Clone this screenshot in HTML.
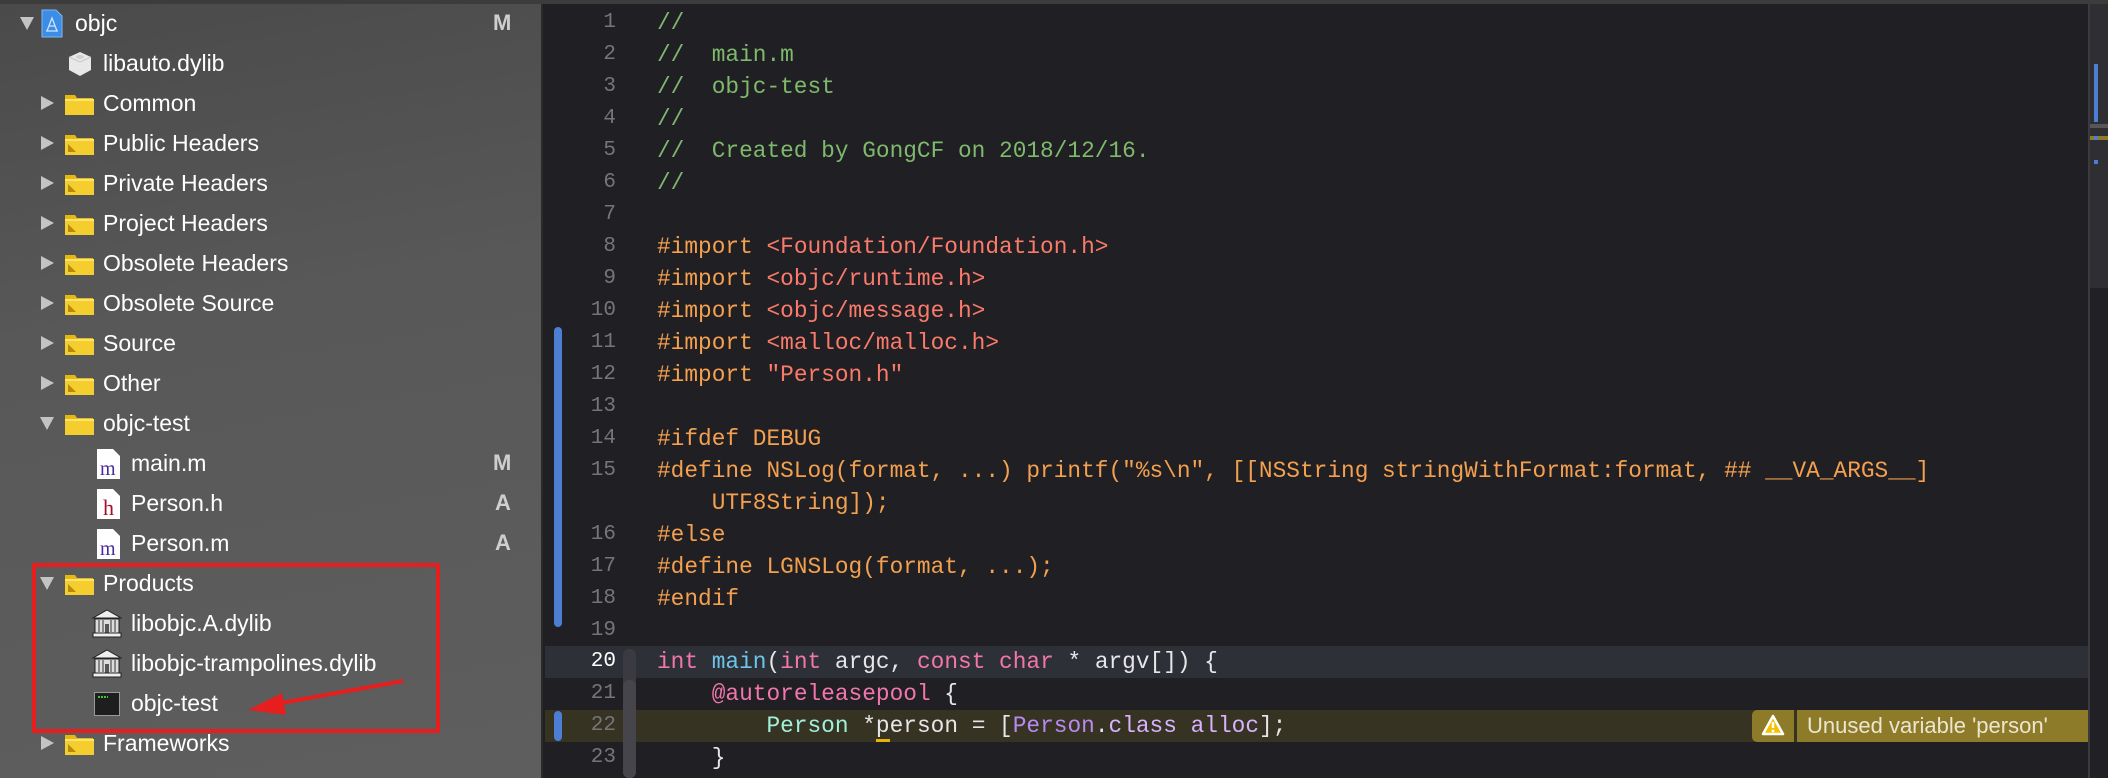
<!DOCTYPE html>
<html><head><meta charset="utf-8"><style>
*{margin:0;padding:0;box-sizing:border-box}
body{width:2108px;height:778px;overflow:hidden;background:#1f1f24;position:relative;font-family:"Liberation Sans",sans-serif}
#side{position:absolute;left:0;top:0;width:543px;height:778px;background:linear-gradient(170deg,#4a4a4a 0%,#585858 40%,#5e5e5e 100%);border-right:2px solid #2a2a2a}
#topline{position:absolute;left:0;top:0;width:2108px;height:4px;background:#3c3c3c;z-index:5}
.r{position:absolute;height:40px;line-height:40px;color:#fff;font-size:23px;white-space:nowrap}
.st{position:absolute;color:#cfcfcf;font-weight:bold;font-size:22px}
#ed{position:absolute;left:545px;top:0;width:1543px;height:778px}
.ln{position:absolute;left:0;width:71px;text-align:right;color:#75757a;font-family:"Liberation Mono",monospace;font-size:21px;height:32px;line-height:32px}
.cl{position:absolute;left:112px;font-family:"Liberation Mono",monospace;font-size:22.8px;height:32px;line-height:32px;white-space:pre;color:#e6e6e8}
.c{color:#7fb96c}.p{color:#f4a04e}.s{color:#fb7a6a}.k{color:#f276ad}.b{color:#6cc5e8}.m{color:#a0f0dc}.u{color:#b889f0}.w{color:#d7b2ff}
</style></head><body>
<div id="topline"></div>
<div id="side">
<svg style="position:absolute;left:41px;top:9px" width="22" height="29" viewBox="0 0 22 29"><path d="M1 1h14l6 6v21H1z" fill="#3b8de6" stroke="#7fb8f5"/><path d="M6 22l5-13 5 13M8 17h6M5 22h12" stroke="#cfe4ff" stroke-width="1.3" fill="none"/></svg>
<div class="r" style="left:75px;top:3px">objc</div><div class="st" style="left:493px;top:10px">M</div>

<svg style="position:absolute;left:66px;top:50px" width="28" height="28" viewBox="0 0 28 28"><path d="M14 2l11 5v13l-11 6-11-6V7z" fill="#e8e8e8"/><path d="M3 7l11 5 11-5" fill="none" stroke="#c8c8c8"/><ellipse cx="14" cy="7" rx="4" ry="2" fill="#d0d0d0"/></svg>
<div class="r" style="left:103px;top:43px">libauto.dylib</div>

<div class="r" style="left:103px;top:83px">Common</div>
<div class="r" style="left:103px;top:123px">Public Headers</div>
<div class="r" style="left:103px;top:163px">Private Headers</div>
<div class="r" style="left:103px;top:203px">Project Headers</div>
<div class="r" style="left:103px;top:243px">Obsolete Headers</div>
<div class="r" style="left:103px;top:283px">Obsolete Source</div>
<div class="r" style="left:103px;top:323px">Source</div>
<div class="r" style="left:103px;top:363px">Other</div>
<div class="r" style="left:103px;top:403px">objc-test</div>
<div class="r" style="left:131px;top:443px">main.m</div><div class="st" style="left:493px;top:450px">M</div>
<div class="r" style="left:131px;top:483px">Person.h</div><div class="st" style="left:495px;top:490px">A</div>
<div class="r" style="left:131px;top:523px">Person.m</div><div class="st" style="left:495px;top:530px">A</div>
<div class="r" style="left:103px;top:563px">Products</div>
<div class="r" style="left:131px;top:603px">libobjc.A.dylib</div>
<div class="r" style="left:131px;top:643px">libobjc-trampolines.dylib</div>
<div class="r" style="left:131px;top:683px">objc-test</div>
<div class="r" style="left:103px;top:723px">Frameworks</div>

<svg style="position:absolute;left:97px;top:449px" width="23" height="30"><path d="M0 0h16l7 7v23H0z" fill="#fff"/><text x="3" y="26" font-family="Liberation Serif" font-size="20" fill="#4b2a9e">m</text></svg>
<svg style="position:absolute;left:97px;top:489px" width="23" height="30"><path d="M0 0h16l7 7v23H0z" fill="#fff"/><text x="6" y="26" font-family="Liberation Serif" font-size="22" fill="#a3102a">h</text></svg>
<svg style="position:absolute;left:97px;top:529px" width="23" height="30"><path d="M0 0h16l7 7v23H0z" fill="#fff"/><text x="3" y="26" font-family="Liberation Serif" font-size="20" fill="#4b2a9e">m</text></svg>
<svg style="position:absolute;left:92px;top:609px" width="30" height="30" viewBox="0 0 30 30"><path d="M15 1l14 8H1z" fill="#eee" stroke="#222"/><rect x="3" y="10" width="24" height="14" fill="#ddd" stroke="#222"/><path d="M7 11v12M11 11v12M19 11v12M23 11v12" stroke="#888" stroke-width="2"/><rect x="13" y="15" width="4" height="9" fill="#555"/><rect x="1" y="24" width="28" height="4" fill="#eee" stroke="#222"/></svg>
<svg style="position:absolute;left:92px;top:649px" width="30" height="30" viewBox="0 0 30 30"><path d="M15 1l14 8H1z" fill="#eee" stroke="#222"/><rect x="3" y="10" width="24" height="14" fill="#ddd" stroke="#222"/><path d="M7 11v12M11 11v12M19 11v12M23 11v12" stroke="#888" stroke-width="2"/><rect x="13" y="15" width="4" height="9" fill="#555"/><rect x="1" y="24" width="28" height="4" fill="#eee" stroke="#222"/></svg>
<svg style="position:absolute;left:94px;top:692px" width="26" height="24"><rect x="0.5" y="0.5" width="25" height="23" fill="#1e1e1e" stroke="#9a9a9a"/><path d="M4 5h10" stroke="#3fc43f" stroke-width="2" stroke-dasharray="2 1"/></svg>

<div style="position:absolute;left:32px;top:563px;width:408px;height:170px;border:4px solid #e61e1e"></div>
<svg style="position:absolute;left:0;top:0" width="541" height="778"><path d="M403 681L270 705" stroke="#e61e1e" stroke-width="4"/><path d="M248 710l34-17 4 22z" fill="#e61e1e"/></svg>
</div>

<div id="ed">
<div style="position:absolute;left:0;top:646px;width:1543px;height:32px;background:#2e3038"></div>
<div style="position:absolute;left:0;top:710px;width:1543px;height:32px;background:#363323"></div>
<div style="position:absolute;left:9px;top:327px;width:8px;height:300px;background:#4c7fd4;border-radius:4px"></div>
<div style="position:absolute;left:9px;top:711px;width:8px;height:30px;background:#4c7fd4;border-radius:4px"></div>
<div style="position:absolute;left:78px;top:649px;width:13px;height:129px;background:#3a3a40;border-radius:6px"></div>
<div style="position:absolute;left:78px;top:680px;width:13px;height:98px;background:#45454b;border-radius:6px"></div>

<div class="ln" style="top:7px">1</div><div class="cl c" style="top:7px">//</div>
<div class="ln" style="top:39px">2</div><div class="cl c" style="top:39px">//  main.m</div>
<div class="ln" style="top:71px">3</div><div class="cl c" style="top:71px">//  objc-test</div>
<div class="ln" style="top:103px">4</div><div class="cl c" style="top:103px">//</div>
<div class="ln" style="top:135px">5</div><div class="cl c" style="top:135px">//  Created by GongCF on 2018/12/16.</div>
<div class="ln" style="top:167px">6</div><div class="cl c" style="top:167px">//</div>
<div class="ln" style="top:199px">7</div>
<div class="ln" style="top:231px">8</div><div class="cl" style="top:231px"><span class="p">#import </span><span class="s">&lt;Foundation/Foundation.h&gt;</span></div>
<div class="ln" style="top:263px">9</div><div class="cl" style="top:263px"><span class="p">#import </span><span class="s">&lt;objc/runtime.h&gt;</span></div>
<div class="ln" style="top:295px">10</div><div class="cl" style="top:295px"><span class="p">#import </span><span class="s">&lt;objc/message.h&gt;</span></div>
<div class="ln" style="top:327px">11</div><div class="cl" style="top:327px"><span class="p">#import </span><span class="s">&lt;malloc/malloc.h&gt;</span></div>
<div class="ln" style="top:359px">12</div><div class="cl" style="top:359px"><span class="p">#import </span><span class="s">"Person.h"</span></div>
<div class="ln" style="top:391px">13</div>
<div class="ln" style="top:423px">14</div><div class="cl p" style="top:423px">#ifdef DEBUG</div>
<div class="ln" style="top:455px">15</div><div class="cl p" style="top:455px">#define NSLog(format, ...) printf("%s\n", [[NSString stringWithFormat:format, ## __VA_ARGS__]</div>
<div class="cl p" style="top:487px">    UTF8String]);</div>
<div class="ln" style="top:519px">16</div><div class="cl p" style="top:519px">#else</div>
<div class="ln" style="top:551px">17</div><div class="cl p" style="top:551px">#define LGNSLog(format, ...);</div>
<div class="ln" style="top:583px">18</div><div class="cl p" style="top:583px">#endif</div>
<div class="ln" style="top:615px">19</div>
<div class="ln" style="top:646px;color:#fff">20</div><div class="cl" style="top:646px"><span class="k">int</span> <span class="b">main</span>(<span class="k">int</span> argc, <span class="k">const char</span> * argv[]) {</div>
<div class="ln" style="top:678px">21</div><div class="cl" style="top:678px">    <span class="k">@autoreleasepool</span> {</div>
<div class="ln" style="top:710px">22</div><div class="cl" style="top:710px">        <span class="m">Person</span> *<span style="border-bottom:3px solid #e8b400">p</span>erson = [<span class="u">Person</span>.<span class="w">class alloc</span>];</div>
<div class="ln" style="top:742px">23</div><div class="cl" style="top:742px">    }</div>

<div style="position:absolute;left:1207px;top:710px;width:336px;height:32px;background:#8d7b2a;border-radius:5px 0 0 5px"></div>
<div style="position:absolute;left:1249px;top:710px;width:3px;height:32px;background:#363323"></div>
<svg style="position:absolute;left:1216px;top:714px" width="24" height="22" viewBox="0 0 24 22"><path d="M12 2L22 20H2z" fill="#f5c000" stroke="#fff" stroke-width="2.5" stroke-linejoin="round"/><path d="M12 8v6" stroke="#fff" stroke-width="2.5"/><circle cx="12" cy="17" r="1.4" fill="#fff"/></svg>
<div style="position:absolute;left:1262px;top:710px;height:32px;line-height:32px;font-size:22px;color:#ece6d0">Unused variable 'person'</div>
</div>

<div style="position:absolute;left:2088px;top:4px;width:20px;height:284px;background:#2e2e33;border-left:2px solid #3a3a3f"></div>
<div style="position:absolute;left:2088px;top:288px;width:20px;height:490px;background:#212125;border-left:2px solid #3a3a3f"></div>
<div style="position:absolute;left:2094px;top:64px;width:4px;height:58px;background:#4c7fd4"></div>
<div style="position:absolute;left:2090px;top:124px;width:18px;height:4px;background:#55555a"></div>
<div style="position:absolute;left:2090px;top:136px;width:18px;height:4px;background:#8d7b2a"></div>
<div style="position:absolute;left:2094px;top:136px;width:4px;height:4px;background:#4c7fd4"></div>
<div style="position:absolute;left:2094px;top:160px;width:4px;height:4px;background:#4c7fd4"></div>

<svg style="position:absolute;left:0;top:0" width="541" height="778">
<defs><g id="f"><path d="M0 3h10l2 3h16v17H0z" fill="#e8b80c"/><rect x="0" y="7" width="29" height="16" fill="#f4cd2e"/><rect x="0" y="7" width="29" height="2" fill="#fbe27a"/></g>
<g id="fs"><use href="#f"/><path d="M3 20V12l8 8z" fill="#b88a0a"/></g></defs>
<use href="#f" x="65" y="92"/>
<use href="#fs" x="65" y="132"/><use href="#fs" x="65" y="172"/><use href="#fs" x="65" y="212"/><use href="#fs" x="65" y="252"/><use href="#fs" x="65" y="292"/><use href="#fs" x="65" y="332"/><use href="#fs" x="65" y="372"/>
<use href="#f" x="65" y="412"/><use href="#fs" x="65" y="572"/><use href="#fs" x="65" y="732"/>
<g fill="#c4c4c4"><path d="M20 17h14l-7 13z"/><path d="M41 96l13 7-13 7z"/><path d="M41 136l13 7-13 7z"/><path d="M41 176l13 7-13 7z"/><path d="M41 216l13 7-13 7z"/><path d="M41 256l13 7-13 7z"/><path d="M41 296l13 7-13 7z"/><path d="M41 336l13 7-13 7z"/><path d="M41 376l13 7-13 7z"/><path d="M41 736l13 7-13 7z"/>
<path d="M40 417h14l-7 13z"/><path d="M40 577h14l-7 13z"/></g>
</svg>
</body></html>
